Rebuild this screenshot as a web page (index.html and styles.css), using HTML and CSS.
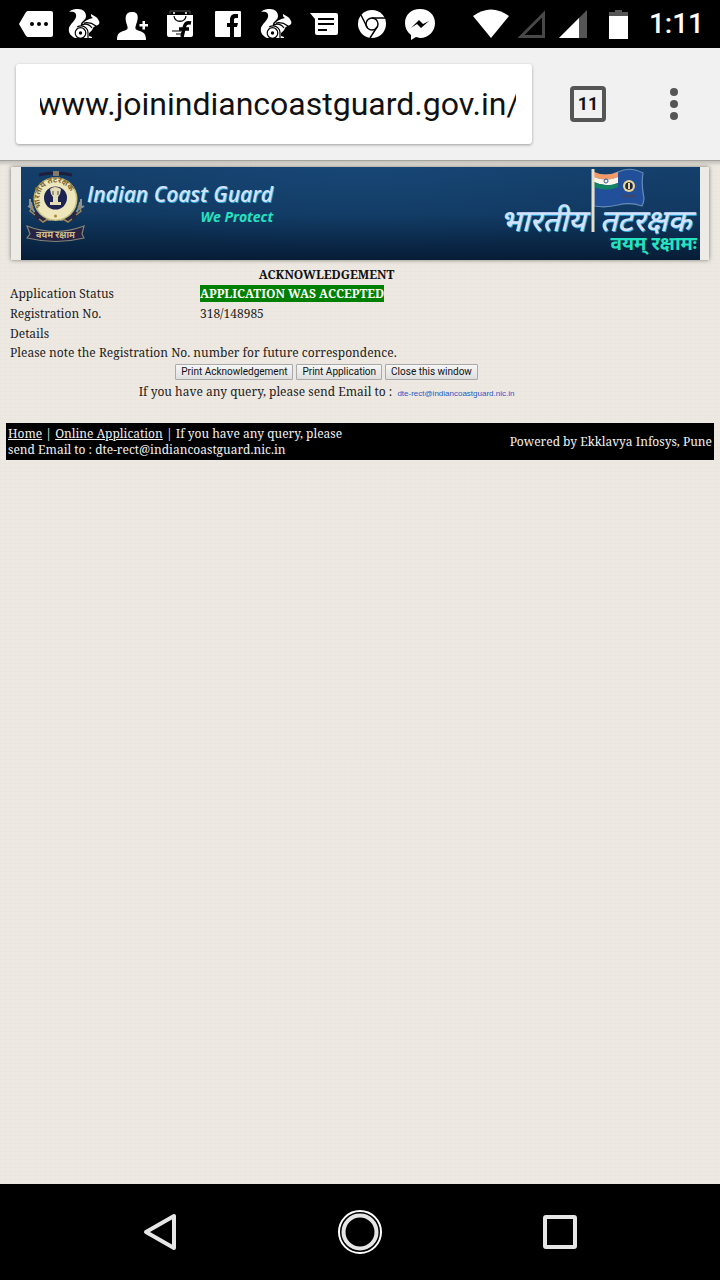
FILE: index.html
```html
<!DOCTYPE html>
<html lang="en">
<head>
<meta charset="utf-8">
<meta name="viewport" content="width=device-width, initial-scale=1">
<title>Join Indian Coast Guard</title>
<link rel="stylesheet" href="styles.css">
</head>
<body>
<svg class="defs" aria-hidden="true">
  <symbol id="squirrel" viewBox="0 0 32 32">
    <path fill="#fff" d="M1 4C4 1 7 1 10 1c5 0 8 3 8 7 0 5-6 5-5 10 3-5 7-7 12-8-2-1-2-2-2-4l5 3c2 1 2 3 3 4 1 2 0 3-1 4-2 1-4 1-5 3-1 3-3 4-4 5v3l3 1v1H7C3 28 0 25 1 20c1-4 6-7 7-11C9 5 6 3 1 4Z"/>
    <g fill="none" stroke="#000" stroke-width="1.200"><circle cx="12.500" cy="25" r="5.300"/><path d="M9 19c6-3 11 1 11 6v5M13 17c5-2 9 0 11 3M16 15c5-1 8 0 12 3"/></g><circle cx="12.500" cy="25" r="1.700"/>
  </symbol>
</svg>

<header class="status">
  <div class="notices">
    <svg viewBox="0 0 48 48"><path fill="#fff" d="M7 24 14 12q1-1 2-1h23q2 0 2 2v22q0 2-2 2H16q-1 0-2-1Z"/><circle cx="20" cy="24" r="2"/><circle cx="27" cy="24" r="2"/><circle cx="34" cy="24" r="2"/></svg>
    <svg viewBox="0 0 48 48"><use href="#squirrel" x="8" y="8" width="32" height="32"/></svg>
    <svg viewBox="0 0 48 48"><path fill="#fff" d="M24 12c8 0 6 8 4 13-1 3-1 4 1 5 5 2 9 2 9 10H9c0-8 4-8 9-10 2-1 2-2 1-5-2-5-3-13 5-13ZM34.500 21h2.500v3h3v2.500h-3v3h-2.500v-3h-3V24h3Z"/></svg>
    <svg viewBox="0 0 48 48"><path fill="#fff" d="M11 15h26v20q0 2-2 2H13q-2 0-2-2Z"/><path fill="none" stroke="#555" d="M14 14v-3h20v3"/><path fill="none" stroke="#000" stroke-width="1.300" d="M18 16c1 7 11 7 12 0"/><circle cx="18" cy="13" r="1" fill="#fff"/><circle cx="30" cy="13" r="1" fill="#fff"/><path fill="none" stroke="#000" stroke-width="3.500" d="M35 23c-5-1-6 1-7 5l-2 9M23 29h10"/><path stroke="#000" d="M16 31h9M20 34h5"/></svg>
    <svg viewBox="0 0 48 48"><rect x="11" y="11" width="26" height="26" rx="1" fill="#fff"/><path d="M26 37V27h-3v-4h3v-3c0-4 2-6 5-6h3v4h-2c-2 0-2 1-2 2v3h4l-1 4h-3v10Z"/></svg>
    <svg viewBox="0 0 48 48"><use href="#squirrel" x="8" y="8" width="32" height="32"/></svg>
    <svg viewBox="0 0 48 48"><path fill="#fff" d="M10 13h26q2 0 2 2v18q0 2-2 2H17q-2 0-2-2V19Z"/><path stroke="#000" stroke-width="2.200" d="M18 19h16M18 24h16M18 30h9"/></svg>
    <svg viewBox="0 0 48 48"><circle cx="24" cy="24" r="14" fill="#fff"/><g fill="none" stroke="#000" stroke-width="1.500"><circle cx="24" cy="24" r="6"/><path d="M24 18h13M19 27 13 15M29 27l-7 11"/></g></svg>
    <svg viewBox="0 0 48 48"><path fill="#fff" d="M24 9c9 0 15 6 15 14S33 38 24 38l-4-1-5 3v-5c-4-3-6-7-6-12C9 15 15 9 24 9Z"/><path d="m15 28 8-8 4 4 6-3-8 7-4-4Z"/></svg>
  </div>
  <div class="system">
    <svg class="signal" viewBox="0 0 36 32"><path fill="#fff" d="M0 8Q18-5 36 8L18 30Z"/></svg>
    <svg class="bars" viewBox="0 0 28 32"><path fill="none" stroke="#484848" stroke-width="3" d="M4 28.500 26.500 6v22.500Z"/></svg>
    <svg class="bars" viewBox="0 0 28 32"><path fill="#555" d="M0 30 28 2v28Z"/><path fill="#fff" d="m0 30 20-20v20Z"/></svg>
    <svg class="battery" viewBox="0 0 20 32"><path fill="#555" d="M0 4h6V2h7v2h6v6H0Z"/><path fill="#fff" d="M0 8h19v23H0Z"/></svg>
    <time>1:11</time>
  </div>
</header>

<nav class="toolbar">
  <input class="url" type="text" aria-label="Address" value="www.joinindiancoastguard.gov.in/">
  <button class="tabs" type="button" aria-label="11 open tabs"><span>11</span></button>
  <button class="menu" type="button" aria-label="Menu"><i></i><i></i><i></i></button>
</nav>

<main class="page">
  <div class="banner">
    <div class="brand">
      <svg class="emblem" viewBox="0 0 62 74" role="img" aria-label="Indian Coast Guard emblem">
        <defs><path id="ring" d="M17 38A16 16 0 1 1 44 38"/></defs>
        <g fill="none" stroke="#8c9295" stroke-width="2"><path d="M6 33q2 18 20 18M55 33q-2 18-20 18M5 30v8M56 30v8M3 37l5 3M59 37l-5 3"/></g>
        <path d="M10 43q4 10 12 7M51 43q-4 10-12 7" fill="none" stroke="#292747" stroke-width="5"/>
        <path d="M8 37l-3 5 5 4M53 37l3 5-5 4M14 50l4 3 5-3M47 50l-4 3-5-3" fill="none" stroke="#9b8a58" stroke-width="1.500"/>
        <path d="M14 6q15-4 33 0" fill="none" stroke="#201f3b" stroke-width="3"/><path d="M28 2h6v5h-6z" fill="#81796a"/>
        <circle cx="30.500" cy="30" r="22" fill="#c6bd79"/>
        <circle cx="30.500" cy="30" r="20.500" fill="#eee7bc"/>
        <circle cx="30.500" cy="29" r="11.500" fill="#1d2452"/>
        <text class="ring-text"><textPath href="#ring" startOffset="0">भारतीय तटरक्षक</textPath></text>
        <path fill="#e4dcb6" d="M25 20q5-4 11 0l-1 5-2 3v5h3v3H25v-3h3v-5l-2-3Z"/>
        <path d="M28 22v4M33 22v4" stroke="#514d53"/><circle cx="30.500" cy="47" r="1.500" fill="#ae8639"/>
        <path d="M2 57q28 11 57 0l-2 8 2 4q-28 7-57 0l3-4Z" fill="#262344" stroke="#858477" stroke-width="1.200"/>
        <text class="ribbon-text" x="30.500" y="69">वयम रक्षाम</text>
      </svg>
      <div class="name"><strong>Indian Coast Guard</strong><em>We Protect</em></div>
    </div>
    <div class="hindi" lang="hi">
      <strong><span>भारतीय</span><span>तटरक्षक</span></strong><em>वयम् रक्षामः</em>
      <svg class="flag" viewBox="0 0 58 66" aria-hidden="true">
        <path fill="#214f9a" stroke="#668bb5" stroke-width="1.200" d="M4 5q12 5 24-1t25 1c-2 12 0 20 1 25 0 4-1 6-2 8q-12-4-24-1t-24 1Z"/>
        <path fill="#f49a66" d="M4 4q12 5 24 0v5Q16 14 4 9Z"/><path fill="#f7f4e9" d="M4 9q12 5 24 0v6Q16 20 4 14Z"/><path fill="#128463" d="M4 14q12 6 24 1v4Q16 24 4 19Z"/>
        <circle cx="16" cy="13" r="2" fill="none" stroke="#345b9c"/><circle cx="39" cy="18" r="6" fill="#e7d596"/><circle cx="39" cy="18" r="3.800" fill="#1b2445"/><path d="M39 15v6" stroke="#e7d596" stroke-width="2"/><path d="M32 27q7 3 14 0" fill="none" stroke="#414568" stroke-width="2"/>
        <path stroke="#e6dfc7" stroke-width="3" d="M3 1v63"/>
      </svg>
    </div>
  </div>

  <section class="ack">
    <table>
      <thead><tr><th colspan="2">ACKNOWLEDGEMENT</th></tr></thead>
      <tbody>
        <tr><td class="label">Application Status</td><td><mark>APPLICATION WAS ACCEPTED</mark></td></tr>
        <tr class="record"><td>Registration No.</td><td>318/148985</td></tr>
        <tr class="record"><td>Details</td><td></td></tr>
        <tr><td colspan="2">Please note the Registration No. number for future correspondence.</td></tr>
      </tbody>
    </table>
    <div class="actions"><button type="button">Print Acknowledgement</button><button type="button">Print Application</button><button type="button">Close this window</button></div>
    <p class="query">If you have any query, please send Email to : <span>dte-rect@indiancoastguard.nic.in</span></p>
  </section>

  <footer class="foot">
    <p><a href="#">Home</a> | <a href="#">Online Application</a> | If you have any query, please send Email to : dte-rect@indiancoastguard.nic.in</p>
    <p>Powered by Ekklavya Infosys, Pune</p>
  </footer>
</main>

<nav class="android">
  <button type="button" aria-label="Back"><svg viewBox="0 0 48 48"><path d="M10 24 38 8v32Z" fill="none" stroke="#e6e6e6" stroke-width="4" stroke-linejoin="round"/></svg></button>
  <button type="button" aria-label="Home"><svg viewBox="0 0 48 48"><circle cx="24" cy="24" r="21" fill="none" stroke="#fff" stroke-width="2"/><circle cx="24" cy="24" r="16.500" fill="none" stroke="#e6e6e6" stroke-width="4"/></svg></button>
  <button type="button" aria-label="Recent apps"><svg viewBox="0 0 48 48"><rect x="9" y="9" width="30" height="30" rx="1" fill="none" stroke="#e6e6e6" stroke-width="4"/></svg></button>
</nav>
</body>
</html>
```
FILE: styles.css
```css
* { box-sizing: border-box; }
body {
  margin: 0;
  min-height: 100vh;
  display: flex;
  flex-direction: column;
  background: #ece9e1;
  color: #1c1c1c;
  font: 12px/16px "Noto Serif", "DejaVu Serif Condensed", "DejaVu Serif", serif;
}
p { margin: 0; }
button { font: inherit; color: inherit; }
svg { display: block; }
.defs { position: absolute; width: 0; height: 0; }

.status {
  display: flex;
  justify-content: space-between;
  height: 48px;
  padding: 0 16px 0 12px;
  background: #000;
  color: #fff;
}
.notices, .system { display: flex; align-items: center; }
.notices svg { width: 48px; height: 48px; }
.system svg { height: 32px; }
.system { gap: 14px; }
.signal { width: 36px; margin-right: -6px; }
.bars { width: 28px; }
.battery { width: 20px; margin: 0 6px 0 8px; }
.status time { font: 500 28px/48px Roboto, sans-serif; }

.toolbar {
  display: flex;
  align-items: center;
  height: 113px;
  padding: 0 24px 0 16px;
  background: #f1f1f1;
  border-bottom: 1px solid #a5a3a0;
}
.url {
  flex: 1;
  min-width: 0;
  height: 80px;
  padding: 0 16px 0 24px;
  border: 0;
  border-radius: 3px;
  background: #fff;
  box-shadow: 0 1px 3px rgba(0, 0, 0, .35);
  color: #111;
  font: 32px/40px Roboto, sans-serif;
  text-indent: -3px;
}
.tabs, .menu { padding: 0; border: 0; background: none; }
.tabs { margin: 0 46px 0 38px; }
.tabs span {
  display: block;
  width: 36px;
  height: 36px;
  border: 4px solid #555;
  border-radius: 4px;
  font: 700 18px/28px Roboto, sans-serif;
  color: #111;
}
.menu { display: grid; gap: 4px; width: 44px; justify-items: center; }
.menu i { width: 8px; height: 8px; border-radius: 50%; background: #555; }

.page {
  flex: 1;
  padding: 6px;
  background:
    linear-gradient(rgba(0, 0, 0, .18), transparent) 0 0 / 100% 5px no-repeat,
    repeating-linear-gradient(0deg, rgba(120, 110, 80, .02) 0 1px, transparent 1px 4px),
    repeating-linear-gradient(90deg, rgba(120, 110, 80, .01) 0 1px, transparent 1px 5px),
    #ede9e2;
}
.banner {
  display: flex;
  justify-content: space-between;
  height: 93px;
  margin: 0 5px;
  border: solid #edebe5;
  border-width: 0 9px 0 10px;
  background: radial-gradient(ellipse at 50% 0, rgba(30, 90, 145, .25), transparent 65%), linear-gradient(#153f6c, #113961 50%, #08223f 90%, #071d36);
  background-clip: padding-box;
  box-shadow: 0 0 4px rgba(0, 0, 0, .5);
}
.brand { display: flex; padding: 2px 0 0 4px; }
.emblem { width: 62px; height: 74px; }
.ring-text { font: 700 8px "Noto Sans", sans-serif; fill: #81662e; }
.ribbon-text { font: 700 9px "Noto Sans", sans-serif; fill: #d0bd8c; text-anchor: middle; }
.name { display: flex; flex-direction: column; align-items: flex-end; padding-top: 10px; }
.banner strong {
  color: #d3e2ff;
  font: italic 600 21px/30px "Open Sans", "Noto Sans", sans-serif;
  text-shadow: 1px 1px #2caadb;
}
.banner em { color: #25e3c0; font: italic 700 14px/16px "Open Sans", "Noto Sans", sans-serif; }
.hindi { position: relative; display: flex; flex-direction: column; align-items: flex-end; padding: 42px 3px 0 0; }
.banner .hindi strong { display: flex; gap: 14px; padding-right: 6px; font: italic 500 30px/30px "Noto Sans Devanagari", "Noto Sans", sans-serif; }
.banner .hindi em { font: 700 19px/14px "Noto Sans Devanagari", "Noto Sans", sans-serif; }
.flag { position: absolute; top: 1px; right: 52px; width: 58px; height: 66px; }

.ack { width: 90%; padding: 5px 0 0 4px; }
table { width: 100%; border-spacing: 0; }
th, td { height: 19px; padding: 1px 0; text-align: left; line-height: 17px; }
th { text-align: center; color: #111; }
.record td { height: 20px; }
.label { width: 190px; }
mark { background: #008000; color: #fff; font-weight: 700; }
.actions { display: flex; justify-content: center; gap: 3px; padding: 2px 0 3px; }
.actions button {
  padding: 0 5px;
  border: 1px solid #aaa;
  border-radius: 1px;
  background: linear-gradient(#f6f6f6, #dedede);
  font: 10px/14px Roboto, sans-serif;
  color: #111;
}
.query { text-align: center; line-height: 18px; }
.query span { margin-left: 2px; color: #2857c8; font: 8px/16px "Liberation Sans", sans-serif; }

.foot {
  display: flex;
  justify-content: space-between;
  align-items: center;
  margin-top: 21px;
  padding: 3px 2px 2px;
  background: #000;
  color: #f2f2f2;
}
.foot p:first-child { width: 50%; }
.foot a { color: inherit; }

.android {
  display: flex;
  justify-content: center;
  align-items: center;
  gap: 152px;
  height: 96px;
  background: #000;
}
.android button { padding: 0; border: 0; background: none; }
.android svg { width: 48px; height: 48px; }
```
